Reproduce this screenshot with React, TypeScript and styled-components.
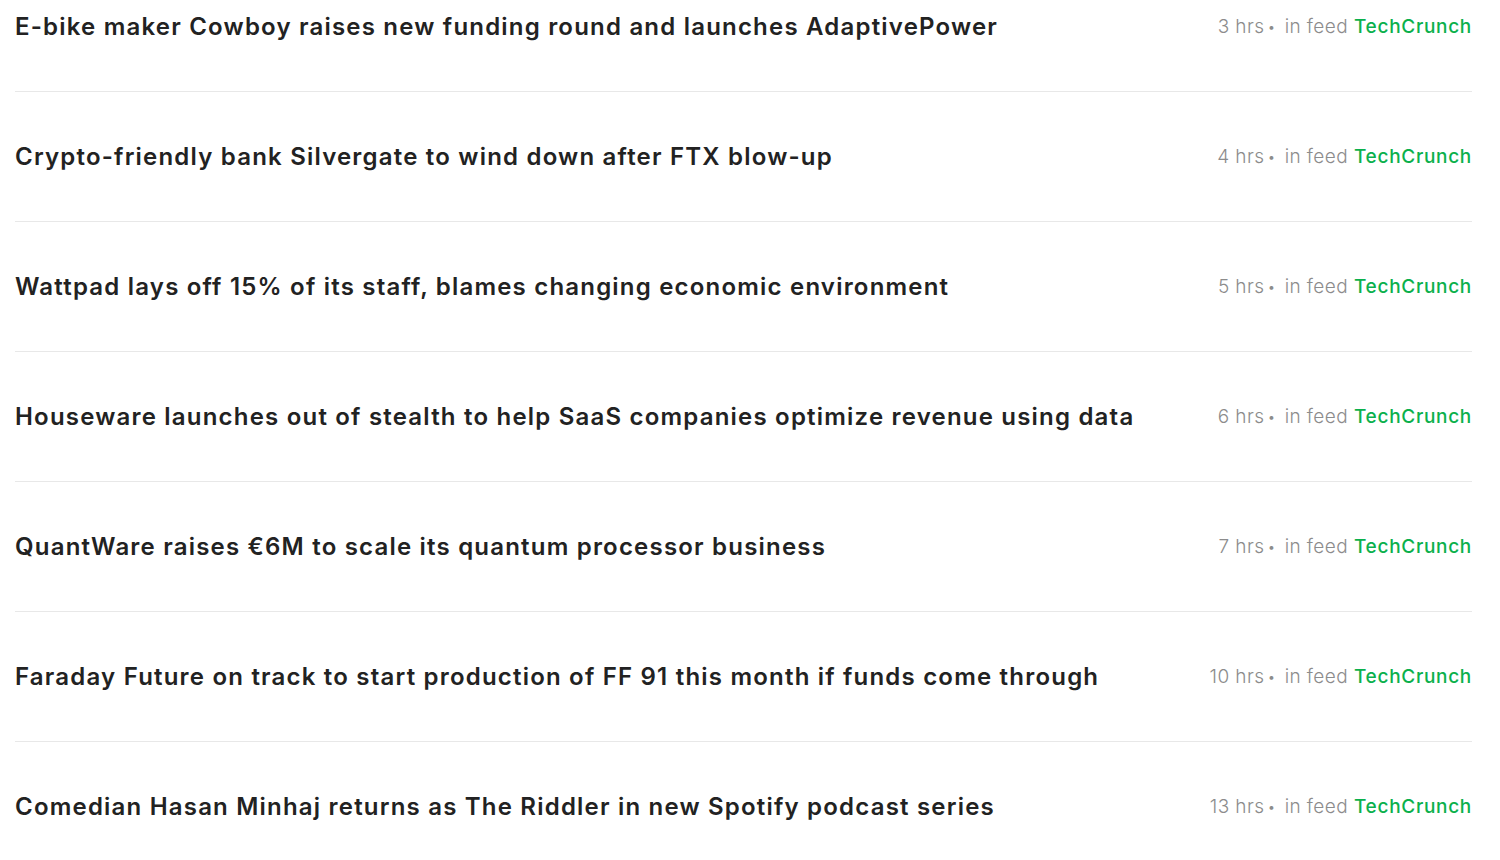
import React from 'react';
import styled, { createGlobalStyle } from 'styled-components';

interface Story {
  title: string;
  age: string;
  feed: string;
}

const stories: Story[] = [
  { title: 'E-bike maker Cowboy raises new funding round and launches AdaptivePower', age: '3 hrs', feed: 'TechCrunch' },
  { title: 'Crypto-friendly bank Silvergate to wind down after FTX blow-up', age: '4 hrs', feed: 'TechCrunch' },
  { title: 'Wattpad lays off 15% of its staff, blames changing economic environment', age: '5 hrs', feed: 'TechCrunch' },
  { title: 'Houseware launches out of stealth to help SaaS companies optimize revenue using data', age: '6 hrs', feed: 'TechCrunch' },
  { title: 'QuantWare raises €6M to scale its quantum processor business', age: '7 hrs', feed: 'TechCrunch' },
  { title: 'Faraday Future on track to start production of FF 91 this month if funds come through', age: '10 hrs', feed: 'TechCrunch' },
  { title: 'Comedian Hasan Minhaj returns as The Riddler in new Spotify podcast series', age: '13 hrs', feed: 'TechCrunch' },
];

const GlobalStyle = createGlobalStyle`
  html, body {
    margin: 0;
    padding: 0;
    background: #fff;
    overflow: hidden;
  }
  body {
    font-family: Inter, "Open Sans", sans-serif;
  }
`;

const Page = styled.div`
  height: 860px;
  overflow: hidden;
  padding: 0 28px 0 15px;
`;

const List = styled.ul`
  list-style: none;
  margin: -38px 0 0;
  padding: 0;
`;

const Row = styled.li`
  display: flex;
  align-items: center;
  justify-content: space-between;
  gap: 40px;
  padding: 50px 0 49px;
  border-bottom: 1px solid #e8e8e8;
`;

const Title = styled.a`
  font-size: 24px;
  line-height: 30px;
  font-weight: 600;
  letter-spacing: 1.2px;
  color: #222;
  text-decoration: none;
  white-space: nowrap;
`;

const Meta = styled.div`
  display: flex;
  align-items: center;
  font-size: 19px;
  line-height: 30px;
  font-weight: 300;
  letter-spacing: 0.4px;
  color: #8c8c8c;
  white-space: nowrap;
`;

const Dot = styled.span`
  margin: 0 9px 0 3px;
  font-size: 14px;
`;

const Feed = styled.span`
  color: #0bb04c;
  font-weight: 500;
  letter-spacing: 0.7px;
  margin-left: 6px;
`;

export default function App() {
  return (
    <Page>
      <GlobalStyle />
      <List>
        {stories.map((s) => (
          <Row key={s.title}>
            <Title href="#">{s.title}</Title>
            <Meta>
              {s.age}
              <Dot>•</Dot>
              in feed
              <Feed>{s.feed}</Feed>
            </Meta>
          </Row>
        ))}
      </List>
    </Page>
  );
}
